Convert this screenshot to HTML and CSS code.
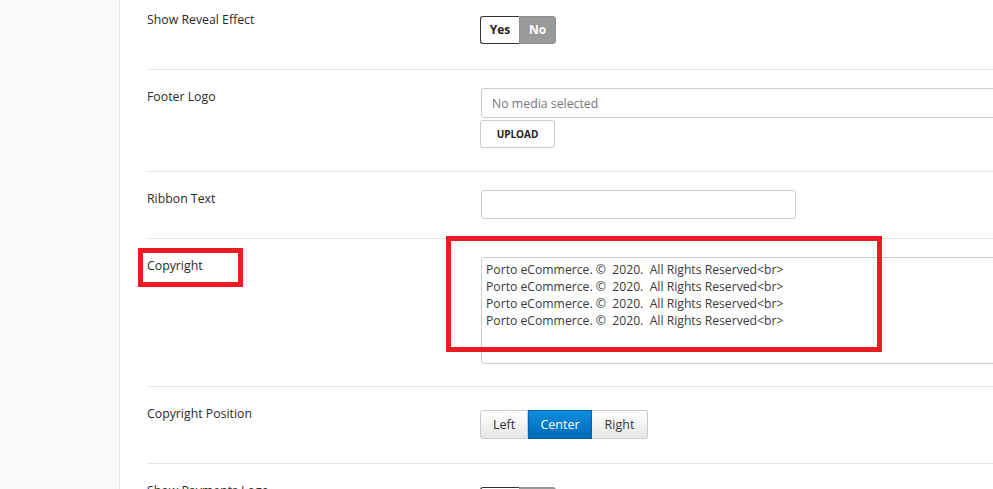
FILE: index.html
```html
<!DOCTYPE html>
<html lang="en">
<head>
  <meta charset="UTF-8">
  <title>Theme Options - Footer</title>
  <meta name="viewport" content="width=device-width, initial-scale=1.0">
  <link rel="stylesheet" href="styles.css">
</head>
<body>
  <div class="page">
    <div class="sidebar"></div>

    <div class="main">
      <div class="row row-first">
        <label class="label">Show Reveal Effect</label>
        <div class="field">
          <div class="toggle">
            <span class="toggle-yes">Yes</span>
            <span class="toggle-no">No</span>
          </div>
        </div>
      </div>

      <div class="row">
        <label class="label">Footer Logo</label>
        <div class="field">
          <input type="text" class="input input-media" placeholder="No media selected" readonly>
          <button class="btn-upload">UPLOAD</button>
        </div>
      </div>

      <div class="row">
        <label class="label">Ribbon Text</label>
        <div class="field">
          <input type="text" class="input input-text">
        </div>
      </div>

      <div class="row">
        <label class="label marked">Copyright<span class="mark mark-label"></span></label>
        <div class="field">
          <div class="area-wrap">
            <textarea class="textarea">Porto eCommerce. ©  2020.  All Rights Reserved&lt;br&gt;
Porto eCommerce. ©  2020.  All Rights Reserved&lt;br&gt;
Porto eCommerce. ©  2020.  All Rights Reserved&lt;br&gt;
Porto eCommerce. ©  2020.  All Rights Reserved&lt;br&gt;</textarea>
            <span class="mark mark-area"></span>
          </div>
        </div>
      </div>

      <div class="row">
        <label class="label">Copyright Position</label>
        <div class="field">
          <div class="btn-group">
            <button class="btn btn-left">Left</button>
            <button class="btn btn-center active">Center</button>
            <button class="btn btn-right">Right</button>
          </div>
        </div>
      </div>

      <div class="row">
        <label class="label">Show Payments Logo</label>
        <div class="field">
          <div class="toggle">
            <span class="toggle-yes">Yes</span>
            <span class="toggle-no">No</span>
          </div>
        </div>
      </div>
    </div>
  </div>
</body>
</html>
```

FILE: styles.css
```css
html, body {
  margin: 0;
  height: 100%;
  overflow: hidden;
}

body {
  font-family: "Open Sans", "Noto Sans", sans-serif;
  font-size: 12px;
  color: #333;
  background: #fff;
}

.page {
  display: flex;
  min-height: 100%;
}

.sidebar {
  width: 119px;
  flex: none;
  background: #f9f9f9;
  border-right: 1px solid #e5e5e5;
}

.main {
  flex: 1;
  padding-left: 27px;
}

.row {
  display: grid;
  grid-template-columns: 333px 1fr;
  border-top: 1px solid #e5e5e5;
  padding-top: 18px;
}

.row-first {
  border-top: none;
  padding-top: 11px;
}

.label {
  font-size: 12.3px;
  line-height: 18px;
  color: #2a2a2a;
}

.marked {
  position: relative;
  align-self: start;
}

.field {
  min-width: 0;
}

/* yes / no switch */
.toggle {
  display: inline-flex;
  height: 28px;
  margin: 5px 0 25px;
  font-weight: bold;
  line-height: 26px;
}

.toggle-yes {
  width: 38px;
  text-align: center;
  background: #fff;
  color: #222;
  border: 1px solid #333;
  border-right: none;
  border-radius: 3px 0 0 3px;
}

.toggle-no {
  width: 35px;
  text-align: center;
  background: #999;
  color: #fff;
  border: 1px solid #8f8f8f;
  border-radius: 0 3px 3px 0;
}

/* inputs */
.input {
  display: block;
  box-sizing: border-box;
  margin-left: 1px;
  font-family: inherit;
  font-size: 12px;
  color: #444;
  border: 1px solid #ccc;
  border-radius: 3px;
  background: #fff;
  outline: none;
}

.input-media {
  width: 700px;
  height: 30px;
  padding: 0 10px;
  font-size: 12.3px;
}

.input-media::placeholder {
  color: #777;
}

.input-text {
  width: 315px;
  height: 29px;
  padding: 0 8px;
  margin-bottom: 19px;
}

.btn-upload {
  display: block;
  width: 75px;
  height: 28px;
  margin: 2px 0 23px;
  font-family: inherit;
  font-size: 10px;
  font-weight: bold;
  color: #222;
  background: #fff;
  border: 1px solid #ccc;
  border-radius: 3px;
}

.area-wrap {
  position: relative;
  margin-bottom: 22px;
}

.textarea {
  display: block;
  box-sizing: border-box;
  width: 700px;
  height: 107px;
  margin-left: 1px;
  padding: 3px 4px;
  font-family: inherit;
  font-size: 12.2px;
  line-height: 17px;
  color: #3a3a3a;
  border: 1px solid #ccc;
  border-radius: 3px;
  resize: none;
  white-space: pre-wrap;
}

/* left / center / right */
.btn-group {
  display: inline-flex;
  margin: 5px 0 24px;
}

.btn {
  height: 29px;
  padding: 0;
  font-family: inherit;
  font-size: 12.5px;
  color: #333;
  background: linear-gradient(#fff, #e6e6e6);
  border: 1px solid #ccc;
}

.btn-left {
  width: 48px;
  border-radius: 3px 0 0 3px;
}

.btn-center {
  width: 64px;
}

.btn-right {
  width: 56px;
  border-left: none;
  border-radius: 0 3px 3px 0;
}

.btn.active {
  color: #fff;
  background: linear-gradient(#0d8ddc, #0068b9);
  border-color: #0063ad;
}

/* red annotation frames */
.mark {
  position: absolute;
  box-sizing: border-box;
  border: 5px solid #ed1c24;
  pointer-events: none;
}

.mark-label {
  left: -9px;
  top: -9px;
  width: 105px;
  height: 39px;
}

.mark-area {
  left: -34px;
  top: -21px;
  width: 436px;
  height: 116px;
}
```
